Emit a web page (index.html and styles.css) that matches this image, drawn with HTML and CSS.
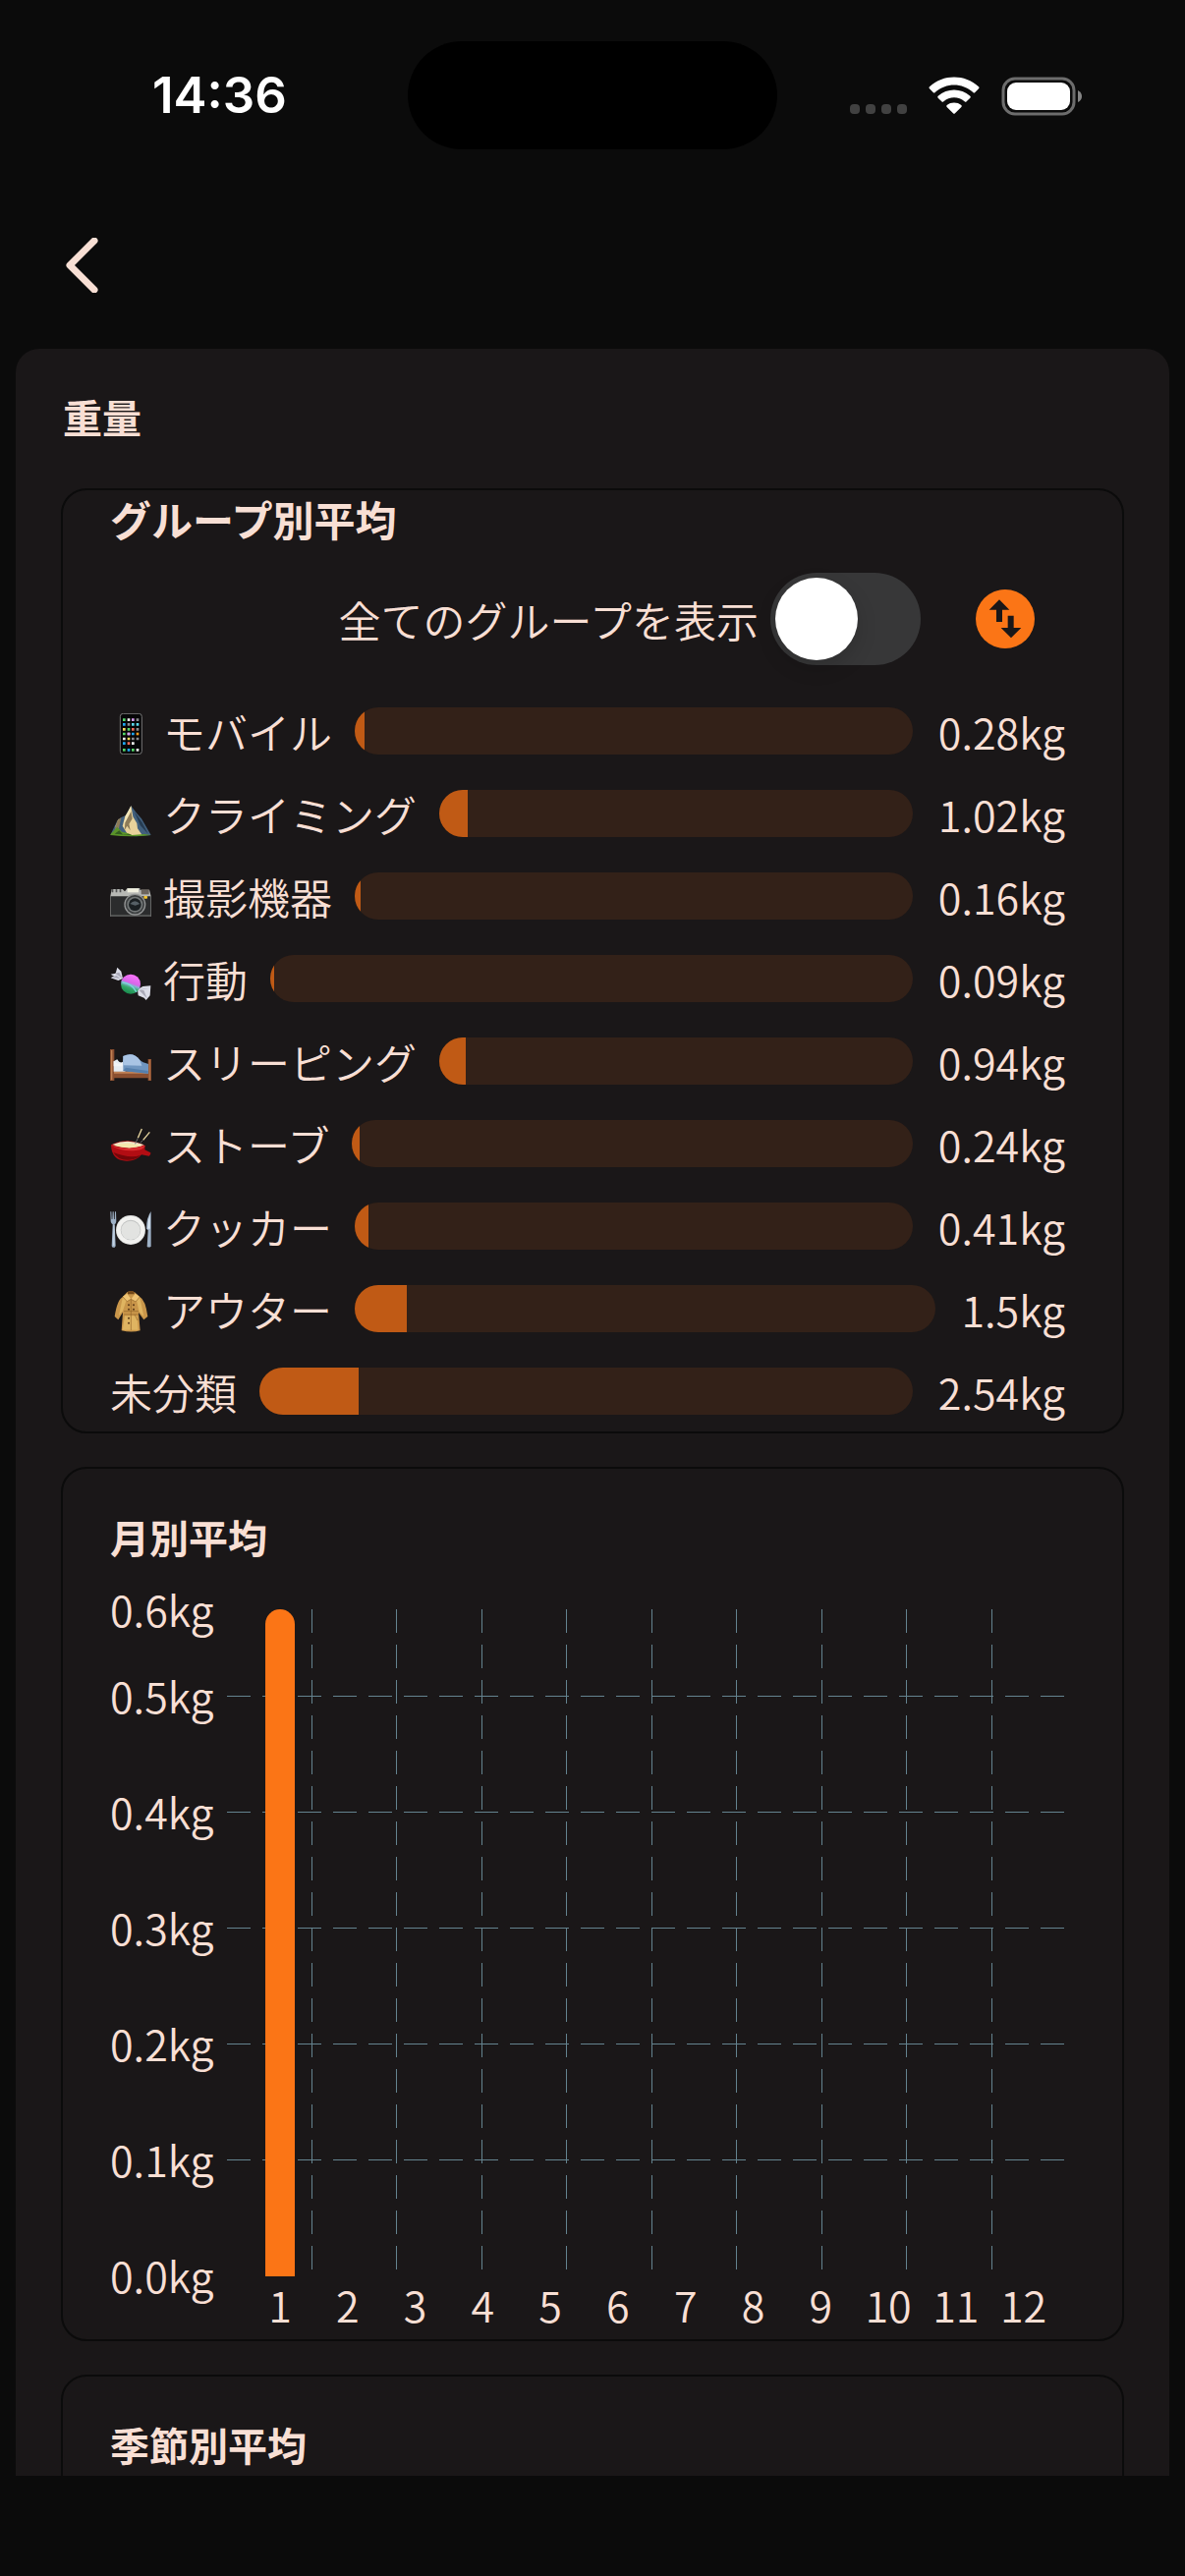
FILE: index.html
```
<!DOCTYPE html>
<html lang="ja">
<head>
<meta charset="utf-8">
<meta name="viewport" content="width=device-width">
<title>重量</title>
<link rel="stylesheet" href="styles.css">
</head>
<body>
<header class="status">
  <time class="clock">14:36</time>
  <div class="island"></div>
  <div class="indicators">
    <svg width="58" height="40" viewBox="0 0 58 40" fill="#414141"><rect y="28" width="10" height="10" rx="4"/><rect x="16" y="28" width="10" height="10" rx="4"/><rect x="32" y="28" width="10" height="10" rx="4"/><rect x="48" y="28" width="10" height="10" rx="4"/></svg>
    <svg class="wifi" width="52" height="40" viewBox="0 0 156 120" fill="#fff"><path d="M3 37Q0 34 3 31C45-8 111-8 153 31Q156 34 153 37L142 48Q139 51 136 48C103 18 53 18 20 48Q17 51 14 48Z"/><path d="M29 65Q26 62 29 59C57 34 99 34 127 59Q130 62 127 65L116 76Q113 79 110 76C92 60 64 60 46 76Q43 79 40 76Z"/><path d="M56 93Q53 90 56 87C68 77 88 77 100 87Q103 90 100 93L81 112Q78 115 75 112Z"/></svg>
    <svg width="83" height="40" viewBox="0 0 83 40"><rect x="2" y="2" width="72" height="36" rx="12" fill="none" stroke="#6d6d6d" stroke-width="3"/><rect x="6" y="6" width="64" height="28" rx="9" fill="#fff"/><path d="M78 14Q82 16 82 20T78 26Z" fill="#858585"/></svg>
  </div>
</header>
<nav class="nav">
  <button class="back" type="button" aria-label="戻る"><svg width="36" height="56" viewBox="0 0 36 56" fill="none" stroke="#f8dfd4" stroke-width="7" stroke-linecap="round" stroke-linejoin="round"><path d="M31 3 6 28 31 53"/></svg></button>
</nav>
<main class="scroller">
  <section class="panel">
    <h1 class="heading page-title">重量</h1>
    <div class="cards">
      <section class="card groups">
        <h2 class="heading heading-large">グループ別平均</h2>
        <div class="toolbar">
          <label class="toggle">全てのグループを表示<input class="switch" type="checkbox" role="switch"></label>
          <button class="sort" type="button" aria-label="並べ替え"><svg width="60" height="60" viewBox="0 0 180 180"><path fill="#1a1718" d="M41 62 72 31l31 31H81v37H63V62ZM98 80h18v37h23l-31 31-31-31h21Z"/></svg></button>
        </div>
        <ul class="rows">
          <li class="row">
            <svg class="icon" viewBox="0 0 126 126"><rect x="31" y="1" width="66" height="124" rx="9" fill="#060607" stroke="#777" stroke-width="3"/><g stroke-width="8" stroke-dasharray="8 6"><path stroke="#54d86a" d="M39 20h8M39 63h8M53 49h8M66 112h8"/><path stroke="#f0f0f0" d="M53 20h8M39 78h8M53 63h8M66 92h8M80 112h8"/><path stroke="#d79af2" d="M66 20h8M53 63h8"/><path stroke="#20a8f5" d="M39 34h8M66 63h8M39 92h8M53 112h8"/><path stroke="#8b8b8f" d="M80 20h8M80 49h8M80 78h8M53 34h8M66 78h8"/><path stroke="#f4dc5a" d="M39 49h8M53 78h8"/><path stroke="#f06a5a" d="M66 49h8M53 92h8"/><path stroke="#5cd8ee" d="M80 34h8M66 34h8"/><path stroke="#f39a1c" d="M80 63h8"/><path stroke="#54d86a" d="M39 112h8"/></g></svg>
            <span class="name">モバイル</span>
            <span class="track"><span class="fill" style="width:1.7%"></span></span><span class="value">0.28kg</span>
          </li>
          <li class="row">
            <svg class="icon" viewBox="0 0 126 126"><path fill="#42607d" d="M64 31 82 54 96 70 125 120 80 124 2 118 22 76 34 66 47 60Z"/><path fill="#e8d29b" d="M64 31 55 50 46 62 38 92 55 120 98 120 84 100 82 84 70 64Z"/><path fill="#f4e5b5" d="M64 31 48 60 42 86 61 68ZM27 70 15 96 30 82Z"/><path fill="#8d7b58" d="m64 48 4 22-10 16 4 20-10-14-8 14 2-24ZM34 66 27 99 12 112 22 76Z"/><path fill="#263c52" d="m74 48 24 34 18 34-24-26Z"/><path fill="#5a9429" d="M1 118 22 95 36 110 54 114 67 120 104 117 125 120Q66 128 1 120Z"/><path fill="#335d20" d="m14 116 14-10 12 13 18-2 10 4Z"/></svg>
            <span class="name">クライミング</span>
            <span class="track"><span class="fill" style="width:6.1%"></span></span><span class="value">1.02kg</span>
          </li>
          <li class="row">
            <svg class="icon" viewBox="0 0 126 126"><path fill="#b7b8b4" d="M5 33h33l7 7 8-10h38v5h29l5 20v62H1V54Z"/><path fill="#2b2c2d" d="M2 55h122v58H2Z"/><path fill="#535454" d="M5 33h5v10H5Zm12 0h5v10h-5Zm12 0h5v10h-5ZM1 113h124v4H1Z"/><rect x="53" y="31" width="34" height="12" fill="#f1f0df"/><rect x="95" y="34" width="24" height="15" fill="#6b645d"/><circle cx="76" cy="80" r="33" fill="#929494"/><circle cx="76" cy="80" r="29" fill="#3b3e3f"/><circle cx="76" cy="80" r="24" fill="#737777"/><circle cx="76" cy="80" r="19" fill="#1b2023"/><path fill="#566066" d="M61 78q15-16 30 0l-14 5Z"/><rect x="103" y="54" width="11" height="8" rx="2" fill="#f6c52d"/></svg>
            <span class="name">撮影機器</span>
            <span class="track"><span class="fill" style="width:1%"></span></span><span class="value">0.16kg</span>
          </li>
          <li class="row">
            <svg class="icon" viewBox="0 0 126 126"><defs><linearGradient id="candy" x1=".7" y1="0" x2=".35" y2="1"><stop offset="0" stop-color="#ff75ff"/><stop offset=".45" stop-color="#d766e8"/><stop offset=".55" stop-color="#86b4d0"/><stop offset=".7" stop-color="#35a96b"/><stop offset="1" stop-color="#17884a"/></linearGradient></defs><path fill="#dcdde8" d="m22 20 12 12 5 22-14 6-23-8 10-5-10-6 15-3ZM124 76l-2 30-12 14-6-7-18-7-2-18 16-10Z"/><path fill="#aaaab8" d="m15 38 22 15-9-18ZM89 90l24 25-10-25ZM89 90l31-7-26 4ZM4 50l28 5-12-10Z"/><circle cx="63" cy="71" r="30" fill="url(#candy)"/><path fill="none" stroke="#7ad7dc" stroke-width="4" d="M38 66q28 2 43 30"/></svg>
            <span class="name">行動</span>
            <span class="track"><span class="fill" style="width:.6%"></span></span><span class="value">0.09kg</span>
          </li>
          <li class="row">
            <svg class="icon" viewBox="0 0 126 126"><path fill="#8b4f30" d="M0 18h13v96H0ZM116 48h10v66h-10ZM10 84h108v22H10Z"/><path fill="#c08155" d="M3 21h4v91H3ZM119 50h3v62h-3ZM12 87h104v5H12Z"/><path fill="#e6ecf2" d="M11 55q14-13 31-5l5 36H11Z"/><path fill="#141417" d="M22 48q5-9 18-2v12q-12 3-18-10Z"/><path fill="#f2f4f7" d="M11 54q14 15 28 2v14H11Z"/><path fill="#7096c0" d="M40 39q32-14 51 12 7 7 26 12v29L40 84Z"/><path fill="#a9c4e4" d="M40 39q32-14 51 12l6 17-57-1Z"/><path fill="#557fac" d="m48 74 68 10v8L40 84Z"/></svg>
            <span class="name">スリーピング</span>
            <span class="track"><span class="fill" style="width:5.6%"></span></span><span class="value">0.94kg</span>
          </li>
          <li class="row">
            <svg class="icon" viewBox="0 0 126 126"><path fill="#b20d13" d="M3 58q50-25 104 2l-1 13 18 9q1 8-5 10L96 88q-16 20-46 19Q4 106 3 58Z"/><path fill="#d92c2e" d="M3 60q45 18 104 0-4 13-28 15Q36 79 3 60Z"/><path fill="#efe6c8" d="M7 57q48-20 97 1-44 18-97-1Z"/><path fill="#f5e7ac" d="M12 60q42-14 86 1-40 13-86-1Z"/><path fill="#740609" d="M10 81q16 26 48 23 24-2 36-15-34 12-84-8Z"/><path fill="none" stroke="#ead8a1" stroke-width="4" d="M97 9 85 37M121 19 101 43"/><path fill="none" stroke="#696969" stroke-width="3" d="m85 37-8 18M101 43l-9 9"/></svg>
            <span class="name">ストーブ</span>
            <span class="track"><span class="fill" style="width:1.4%"></span></span><span class="value">0.24kg</span>
          </li>
          <li class="row">
            <svg class="icon" viewBox="0 0 126 126"><path fill="#9eb1c6" d="M1 10h3l1 23h2l1-23h3l1 23h2l1-23h3l1 30q-1 7-5 9l3 66-3 4h-6l-3-4 3-66q-5-3-6-9ZM125 9v107q-7 5-12 0l3-49-5-5q0-34 14-53Z"/><path fill="#dbe8f4" d="M11 50h2v63h-3ZM122 16v46h-7q0-25 7-46Z"/><circle cx="63" cy="66" r="45" fill="#dfe1df"/><circle cx="63" cy="66" r="42" fill="#f2f2f0"/><circle cx="63" cy="66" r="31" fill="#bfc1c0"/><circle cx="63" cy="67" r="29" fill="#e2e3e1"/></svg>
            <span class="name">クッカー</span>
            <span class="track"><span class="fill" style="width:2.5%"></span></span><span class="value">0.41kg</span>
          </li>
          <li class="row">
            <svg class="icon" viewBox="0 0 126 126"><path fill="#c9964a" d="M52 4q11-7 23 0l16 14q17 9 24 60l-12 10-16-22 5 55q-26 7-57 0l4-56-14 23-11-10q8-52 25-60Z"/><path fill="#dfb461" d="M49 10 39 17 27 75l12-14 9-27ZM80 10l11 10 12 58-14-14-7-31ZM45 76h37l4 43H38Z"/><path fill="#734818" d="M54 3q10-6 20 0v7H54Z"/><path fill="#efc474" d="m52 8 12 17-13 7-12-14ZM77 8 64 25l15 8 10-16Z"/><path fill="none" stroke="#94662a" stroke-width="2" d="M64 25v95M42 62h45M42 72h45M75 72l9 18M39 18l13 14 12-7 14 8 13-15"/><g fill="#5b3918"><circle cx="57" cy="43" r="3"/><circle cx="72" cy="43" r="3"/><circle cx="57" cy="56" r="3"/><circle cx="72" cy="56" r="3"/><circle cx="57" cy="83" r="3"/><circle cx="57" cy="98" r="3"/></g></svg>
            <span class="name">アウター</span>
            <span class="track"><span class="fill" style="width:8.9%"></span></span><span class="value">1.5kg</span>
          </li>
          <li class="row">
            <span class="name">未分類</span>
            <span class="track"><span class="fill" style="width:15.2%"></span></span><span class="value">2.54kg</span>
          </li>
        </ul>
      </section>
      <section class="card monthly">
        <h2 class="heading">月別平均</h2>
        <div class="chart">
          <div class="y-axis"><span>0.6kg</span><span>0.5kg</span><span>0.4kg</span><span>0.3kg</span><span>0.2kg</span><span>0.1kg</span><span>0.0kg</span></div>
          <div class="plot">
            <svg class="grid" role="img" aria-label="月別平均">
              <g class="grid-lines">
                <path d="M0 88h2000M0 206h2000M0 324h2000M0 442h2000M0 560h2000"/>
                <line x1="10.13%" x2="10.13%" y2="679"/><line x1="20.26%" x2="20.26%" y2="679"/><line x1="30.39%" x2="30.39%" y2="679"/><line x1="40.52%" x2="40.52%" y2="679"/><line x1="50.65%" x2="50.65%" y2="679"/><line x1="60.78%" x2="60.78%" y2="679"/><line x1="70.91%" x2="70.91%" y2="679"/><line x1="81.04%" x2="81.04%" y2="679"/><line x1="91.17%" x2="91.17%" y2="679"/>
              </g>
              <svg x="6.33%" overflow="visible"><path fill="#fb7516" d="M-15 679V15a15 15 0 0 1 30 0v664Z"/></svg>
            </svg>
            <div class="x-axis"><span>1</span><span>2</span><span>3</span><span>4</span><span>5</span><span>6</span><span>7</span><span>8</span><span>9</span><span>10</span><span>11</span><span>12</span></div>
          </div>
        </div>
      </section>
      <section class="card seasonal">
        <h2 class="heading">季節別平均</h2>
      </section>
    </div>
  </section>
</main>
<footer class="home-area"></footer>
</body>
</html>
```
FILE: styles.css
```
* { box-sizing: border-box; }

body {
  margin: 0;
  height: 100vh;
  display: flex;
  flex-direction: column;
  overflow: hidden;
  background: #0b0b0b;
  color: #f8dfd4;
  font: 350 43px/64px "Noto Sans CJK JP", sans-serif;
}

button { padding: 0; border: 0; background: none; }
svg { display: block; flex: none; }

/* status bar */
.status {
  display: grid;
  grid-template-columns: 1fr auto 1fr;
  align-items: center;
  padding: 42px 0;
  color: #fff;
}
.clock { padding-left: 155px; font: 600 51px/60px Inter, sans-serif; }
.island { width: 376px; height: 110px; border-radius: 55px; background: #000; }
.indicators { display: flex; justify-content: flex-end; gap: 22px; padding: 2px 104px 0 0; }

.nav { padding: 48px 65px 57px; }
.back { display: block; }

/* scrolling content */
.scroller { flex: 1; min-height: 0; overflow: hidden; }
.panel {
  margin: 0 16px;
  padding: 39px 46px;
  border-radius: 24px;
  background: #1a1718;
}
.heading { margin: 0; font-size: 40px; line-height: 60px; font-weight: 700; }
.heading-large { font-size: 42px; line-height: 58px; }
.page-title { padding-left: 2px; }
.cards { display: grid; gap: 34px; margin-top: 43px; }
.card { padding: 39px 58px 7px 48px; border: 2px solid #0b0b0b; border-radius: 26px; }
.groups { padding-top: 0; padding-bottom: 9px; }
.seasonal { min-height: 240px; }

.toolbar {
  display: flex;
  justify-content: flex-end;
  align-items: center;
  gap: 56px;
  margin-top: 26px;
  padding-right: 31px;
}
.toggle { display: flex; align-items: center; gap: 12px; }
.switch {
  appearance: none;
  width: 153px;
  height: 94px;
  margin: 0;
  padding: 5px;
  border-radius: 47px;
  background: #373738;
}
.switch::before {
  content: "";
  display: block;
  width: 84px;
  height: 84px;
  border-radius: 50%;
  background: #fff;
  box-shadow: 0 8px 20px rgba(0, 0, 0, .15);
}
.switch:checked { background: #fb7516; }
.switch:checked::before { margin-left: auto; }
.sort { border-radius: 50%; background: #fb7516; }

.rows { display: grid; gap: 20px; margin: 35px 0 0; padding: 0; list-style: none; }
.row { display: flex; align-items: center; }
.icon { width: 42px; height: 42px; margin: 6px 12px 0 0; }
.name { margin-right: 23px; white-space: nowrap; }
.track { flex: 1; height: 48px; overflow: hidden; border-radius: 24px; background: #332118; }
.fill { display: block; height: 100%; background: #c05a15; }
.value { margin-left: 26px; }

/* monthly chart */
.chart { display: grid; grid-template-columns: auto 1fr; column-gap: 13px; margin-top: 14px; }
.y-axis { display: grid; line-height: 118px; }
.y-axis span:first-child { line-height: 58px; }
.plot { min-width: 0; padding-top: 30px; }
.grid { width: 100%; height: 679px; overflow: hidden; }
.grid-lines { fill: none; stroke: #64838f; stroke-width: 1; stroke-dasharray: 24 12; shape-rendering: crispEdges; }
.x-axis {
  display: grid;
  grid-template-columns: repeat(12, 1fr);
  padding: 0 8px 0 20px;
  line-height: 57px;
  text-align: center;
}

.home-area { height: 102px; }
```
